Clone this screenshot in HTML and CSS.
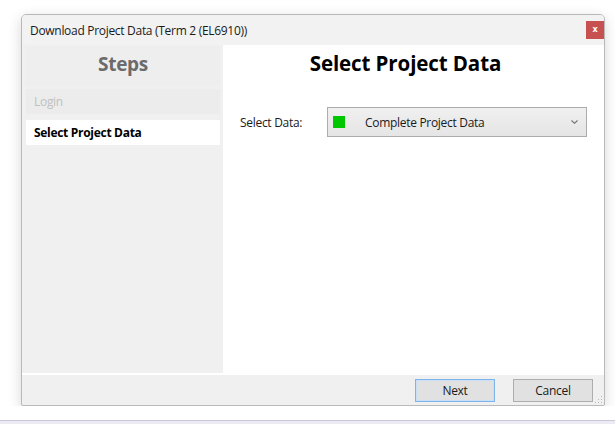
FILE: index.html
```html
<!DOCTYPE html>
<html lang="en">
<head>
  <meta charset="UTF-8">
  <title>Download Project Data</title>
  <link rel="stylesheet" href="styles.css">
</head>
<body>
  <div class="window">
    <div class="titlebar">
      <span class="title">Download Project Data (Term 2 (EL6910))</span>
      <button class="close-btn">x</button>
    </div>

    <div class="content">
      <div class="steps">
        <div class="steps-header">Steps</div>
        <div class="step disabled">Login</div>
        <div class="step active">Select Project Data</div>
      </div>

      <div class="page">
        <h1 class="page-title">Select Project Data</h1>
        <div class="field">
          <label class="field-label">Select Data:</label>
          <div class="combo">
            <span class="swatch"></span>
            <span class="combo-text">Complete Project Data</span>
            <svg class="chevron" width="7" height="4" viewBox="0 0 7 4">
              <path d="M0.5 0.5 L3.5 3.3 L6.5 0.5" fill="none" stroke="#707070" stroke-width="1.1"/>
            </svg>
          </div>
        </div>
      </div>
    </div>

    <div class="buttons">
      <button class="btn focused">Next</button>
      <button class="btn">Cancel</button>
      <svg class="grip" width="9" height="9" viewBox="0 0 9 9">
        <rect x="7" y="1" width="1" height="1" fill="#b8b8b8"/>
        <rect x="4" y="4" width="1" height="1" fill="#b8b8b8"/>
        <rect x="7" y="4" width="1" height="1" fill="#b8b8b8"/>
        <rect x="1" y="7" width="1" height="1" fill="#b8b8b8"/>
        <rect x="4" y="7" width="1" height="1" fill="#b8b8b8"/>
        <rect x="7" y="7" width="1" height="1" fill="#b8b8b8"/>
      </svg>
    </div>
  </div>

  <div class="taskbar"></div>
</body>
</html>
```

FILE: styles.css
```css
body {
  margin: 0;
  background: #ffffff;
  font-family: "Open Sans", "Noto Sans", sans-serif;
  font-size: 12px;
  color: #1a1a1a;
  overflow: hidden;
}

.window {
  margin: 14px 0 0 21px;
  width: 582px;
  height: 390px;
  border: 1px solid #b9b9b9;
  border-radius: 5px 5px 2px 2px;
  background: #f0f0f0;
  box-shadow: 0 4px 14px rgba(0, 0, 0, 0.16);
  display: flex;
  flex-direction: column;
  overflow: hidden;
}

.titlebar {
  height: 30px;
  display: flex;
  align-items: center;
  justify-content: space-between;
  padding: 0 0 0 8px;
  background: #f2f2f2;
}

.title {
  font-size: 12px;
  letter-spacing: -0.3px;
  color: #1a1a1a;
}

.close-btn {
  width: 18px;
  height: 18px;
  padding: 0;
  border: none;
  background: #c75050;
  color: #ffffff;
  font-family: "DejaVu Sans", sans-serif;
  font-size: 8px;
  font-weight: bold;
  line-height: 16px;
}

.content {
  flex: 1;
  display: flex;
  border-bottom: 2px solid #ffffff;
}

.steps {
  width: 201px;
  padding: 1px 3px 0 4px;
  background: #f0f0f0;
}

.steps-header {
  height: 35px;
  padding-bottom: 5px;
  display: flex;
  align-items: center;
  justify-content: center;
  background: #eeeeee;
  color: #6b6b6b;
  font-size: 19px;
  font-weight: bold;
  letter-spacing: -0.3px;
}

.step {
  height: 25px;
  display: flex;
  align-items: center;
  padding-left: 8px;
  letter-spacing: -0.3px;
}

.step.disabled {
  margin-top: 3px;
  background: #ececec;
  color: #c0c0c0;
}

.step.active {
  margin-top: 6px;
  background: #ffffff;
  font-weight: bold;
  color: #000000;
}

.page {
  flex: 1;
  background: #ffffff;
  padding: 0 17px 0 17px;
}

.page-title {
  margin: 0;
  height: 35px;
  padding: 0 16px 5px 0;
  display: flex;
  align-items: center;
  justify-content: center;
  font-size: 20.5px;
  font-weight: bold;
  letter-spacing: -0.1px;
  color: #000000;
}

.field {
  margin-top: 22px;
  display: flex;
  align-items: center;
}

.field-label {
  width: 87px;
  letter-spacing: -0.3px;
  color: #1a1a1a;
}

.combo {
  width: 258px;
  height: 28px;
  display: flex;
  align-items: center;
  border: 1px solid #acacac;
  background: linear-gradient(to bottom, #f0f0f0, #e5e5e5);
}

.swatch {
  width: 12px;
  height: 12px;
  margin-left: 5px;
  background: #00c800;
}

.combo-text {
  flex: 1;
  margin-left: 20px;
  letter-spacing: -0.3px;
  color: #1a1a1a;
}

.chevron {
  margin-right: 8px;
}

.buttons {
  height: 30px;
  display: flex;
  align-items: center;
  justify-content: flex-end;
  padding-right: 11px;
  position: relative;
}

.btn {
  width: 80px;
  height: 23px;
  margin-left: 18px;
  padding: 0;
  border: 1px solid #adadad;
  background: #e1e1e1;
  font-family: "Open Sans", "Noto Sans", sans-serif;
  font-size: 12px;
  letter-spacing: -0.3px;
  color: #1a1a1a;
}

.btn.focused {
  border-color: #7eb4ea;
  box-shadow: inset 0 0 0 1px #c7dff7;
}

.grip {
  position: absolute;
  right: 1px;
  bottom: 1px;
}

.taskbar {
  position: fixed;
  left: 0;
  right: 0;
  bottom: 0;
  height: 3px;
  border-top: 1px solid #c9c9d8;
  background: #ecebf4;
}
```
